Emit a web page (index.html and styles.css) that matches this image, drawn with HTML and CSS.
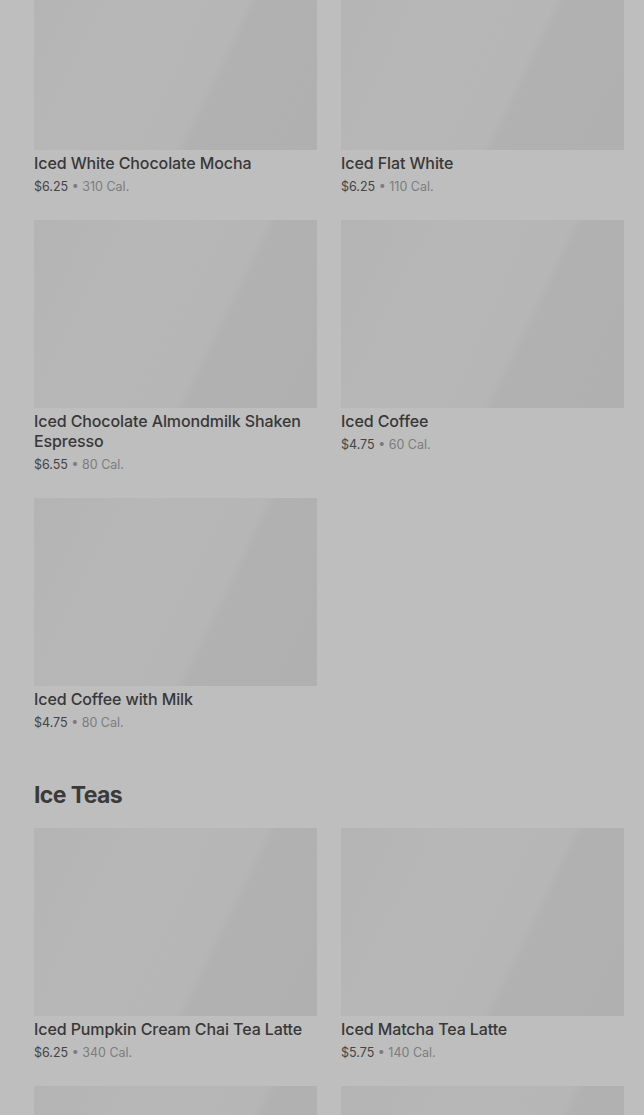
FILE: index.html
```html
<!DOCTYPE html>
<html lang="en">
<head>
    <meta charset="UTF-8">
    <meta name="viewport" content="width=device-width, initial-scale=1.0">
    <title>Menu</title>
    <link rel="stylesheet" href="styles.css">
</head>
<body>

    <main class="menu">

        <section class="menu-section first">
            <div class="item-grid">
                <div class="item">
                    <div class="item-img"></div>
                    <h3 class="item-name">Iced White Chocolate Mocha</h3>
                    <p class="item-meta"><span class="price">$6.25</span> • 310 Cal.</p>
                </div>
                <div class="item">
                    <div class="item-img"></div>
                    <h3 class="item-name">Iced Flat White</h3>
                    <p class="item-meta"><span class="price">$6.25</span> • 110 Cal.</p>
                </div>
                <div class="item">
                    <div class="item-img"></div>
                    <h3 class="item-name">Iced Chocolate Almondmilk Shaken Espresso</h3>
                    <p class="item-meta"><span class="price">$6.55</span> • 80 Cal.</p>
                </div>
                <div class="item">
                    <div class="item-img"></div>
                    <h3 class="item-name">Iced Coffee</h3>
                    <p class="item-meta"><span class="price">$4.75</span> • 60 Cal.</p>
                </div>
                <div class="item">
                    <div class="item-img"></div>
                    <h3 class="item-name">Iced Coffee with Milk</h3>
                    <p class="item-meta"><span class="price">$4.75</span> • 80 Cal.</p>
                </div>
            </div>
        </section>

        <section class="menu-section">
            <h2 class="section-title">Ice Teas</h2>
            <div class="item-grid">
                <div class="item">
                    <div class="item-img"></div>
                    <h3 class="item-name">Iced Pumpkin Cream Chai Tea Latte</h3>
                    <p class="item-meta"><span class="price">$6.25</span> • 340 Cal.</p>
                </div>
                <div class="item">
                    <div class="item-img"></div>
                    <h3 class="item-name">Iced Matcha Tea Latte</h3>
                    <p class="item-meta"><span class="price">$5.75</span> • 140 Cal.</p>
                </div>
                <div class="item">
                    <div class="item-img"></div>
                </div>
                <div class="item">
                    <div class="item-img"></div>
                </div>
            </div>
        </section>

    </main>

</body>
</html>
```

FILE: styles.css
```css
* {
    margin: 0;
    padding: 0;
    box-sizing: border-box;
}
html, body {
    background-color: #bebebe;
    font-family: Inter, "Noto Sans", Arial, sans-serif;
    overflow: hidden;
}
.menu {
    padding: 0 20px 0 34px;
}
.menu-section.first {
    margin-top: -38px; /* page is scrolled into the list */
}
.menu-section + .menu-section {
    margin-top: 47px;
}
.section-title {
    font-size: 23px;
    line-height: 32px;
    font-weight: 700;
    color: #3a3a3a;
    margin-bottom: 17px;
    letter-spacing: -0.6px;
}
.item-grid {
    display: grid;
    grid-template-columns: 1fr 1fr;
    column-gap: 24px;
    row-gap: 24px;
}
.item-img {
    height: 188px;
    background: linear-gradient(116deg, #b4b4b4 0%, #b7b7b7 30%, #b6b6b6 62%, #b1b1b1 65%, #b0b0b0 100%);
}
.item-name {
    margin-top: 3px;
    font-size: 16px;
    line-height: 20px;
    font-weight: 500;
    color: #383838;
    letter-spacing: -0.1px;
}
.item-meta {
    margin-top: 5px;
    font-size: 12.5px;
    line-height: 18px;
    color: #7c7c7c;
}
.price {
    color: #444;
}
```
